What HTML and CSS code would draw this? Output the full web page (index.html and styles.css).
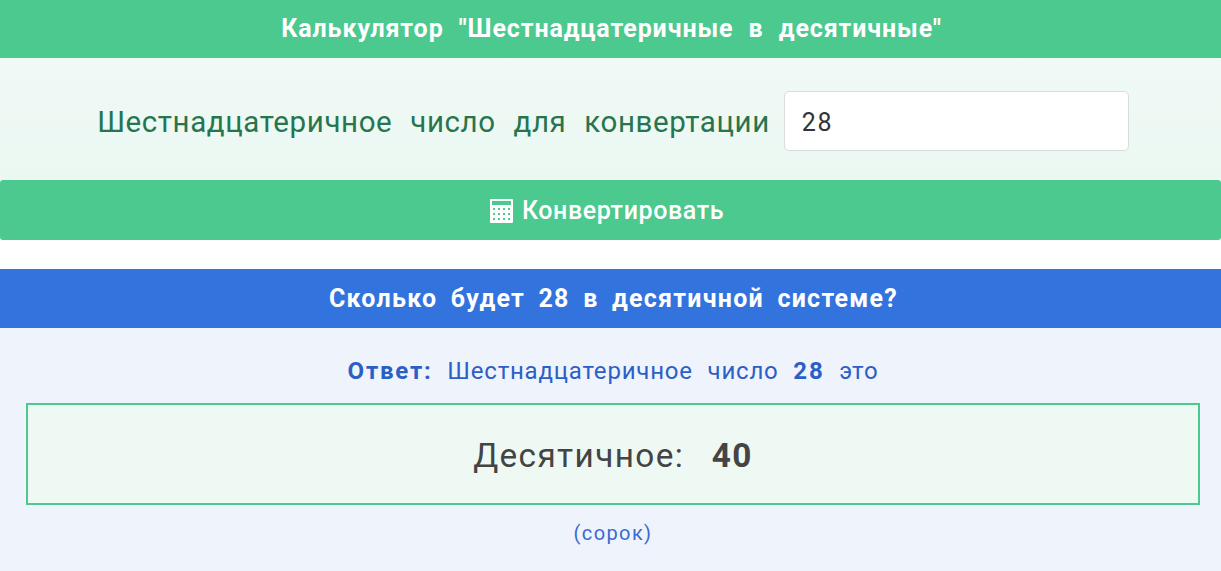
FILE: index.html
```html
<!DOCTYPE html>
<html lang="ru">
<head>
<meta charset="UTF-8">
<title>Шестнадцатеричные в десятичные</title>
<link rel="stylesheet" href="styles.css">
</head>
<body>
	<form class="calc">
		<h2 class="bar bar-green">Калькулятор "Шестнадцатеричные в десятичные"</h2>
		<div class="calc-row">
			<label class="calc-label" for="hex">Шестнадцатеричное число для конвертации</label>
			<input class="calc-input" id="hex" type="text" value="28">
		</div>
		<button class="calc-btn" type="button">
			<svg class="calc-icon" viewBox="0 0 23 24" width="23" height="24" aria-hidden="true">
				<path fill="#fff" fill-rule="evenodd" d="M1 0h21a1 1 0 0 1 1 1v22a1 1 0 0 1-1 1H1a1 1 0 0 1-1-1V1a1 1 0 0 1 1-1zM2 2v4h19V2z"/>
				<path fill="#4BC98F" d="M3 9h2v2H3zM8 9h2v2H8zM13 9h2v2h-2zM18 9h2v2h-2zM3 14h2v2H3zM8 14h2v2H8zM13 14h2v2h-2zM18 14h2v2h-2zM3 19h2v2H3zM8 19h2v2H8zM13 19h2v2h-2zM18 19h2v2h-2z"/>
			</svg>
			Конвертировать
		</button>
	</form>

	<section class="result">
		<h2 class="bar bar-blue">Сколько будет 28 в десятичной системе?</h2>
		<div class="result-body">
			<p class="result-line"><b>Ответ:</b> Шестнадцатеричное число <b>28</b> это</p>
			<div class="result-box">Десятичное: <b>40</b></div>
			<p class="result-words">(сорок)</p>
		</div>
	</section>
</body>
</html>
```

FILE: styles.css
```css
body {
	margin: 0;
	font-family: Roboto, sans-serif;
	background-color: #FFFFFF;
}

h2, p {
	margin: 0;
}

.bar {
	height: 58px;
	color: #FFFFFF;
	font-size: 25px;
	font-weight: bold;
	line-height: 58px;
	text-align: center;
	letter-spacing: 0.9px;
	word-spacing: 8px;
}

.bar-green {
	padding-left: 2px;
	background-color: #4BC98F;
}

.bar-blue {
	height: 59px;
	padding-left: 6px;
	background-color: #3373DE;
	line-height: 60px;
	letter-spacing: 1.25px;
	word-spacing: 6px;
}

.calc {
	margin-bottom: 29px;
}

.calc-row {
	display: flex;
	justify-content: center;
	align-items: center;
	gap: 14px;
	height: 122px;
	padding: 4px 0 0 5px;
	box-sizing: border-box;
	background: linear-gradient(#F0F9F5, #EBF8F2);
}

.calc-label {
	padding-top: 2px;
	color: #26754F;
	font-size: 29.5px;
	letter-spacing: 0.6px;
	word-spacing: 10px;
}

.calc-input {
	width: 345px;
	height: 60px;
	box-sizing: border-box;
	padding: 2px 17px 0;
	border: 1px solid #D9DCDC;
	border-radius: 5px;
	background-color: #FFFFFF;
	color: #333333;
	font-family: Roboto, sans-serif;
	font-size: 25px;
	letter-spacing: 1.6px;
}

.calc-btn {
	display: flex;
	justify-content: center;
	align-items: center;
	gap: 9px;
	width: 100%;
	height: 60px;
	padding: 1px 7px 0 0;
	border: 0;
	border-radius: 3px;
	background-color: #4BC98F;
	color: #FFFFFF;
	font-family: Roboto, sans-serif;
	font-size: 25px;
	font-weight: 500;
	letter-spacing: 0.6px;
}

.result-body {
	height: 243px;
	box-sizing: border-box;
	padding: 26px 21px 0 26px;
	background-color: #EFF3FC;
	text-align: center;
}

.result-line {
	color: #2B5FC8;
	font-size: 24px;
	line-height: 34px;
	letter-spacing: 0.8px;
	word-spacing: 8px;
}

.result-line b {
	letter-spacing: 1.8px;
}

.result-box {
	box-sizing: border-box;
	height: 102px;
	margin-top: 15px;
	border: 2px solid #4BC98F;
	background-color: #EFF9F4;
	color: #444444;
	font-size: 33.3px;
	line-height: 102px;
	letter-spacing: 1.4px;
	word-spacing: 18px;
}

.result-words {
	margin-top: 15px;
	color: #3C6AD0;
	font-size: 20px;
	line-height: 26px;
	letter-spacing: 1.4px;
}
```
